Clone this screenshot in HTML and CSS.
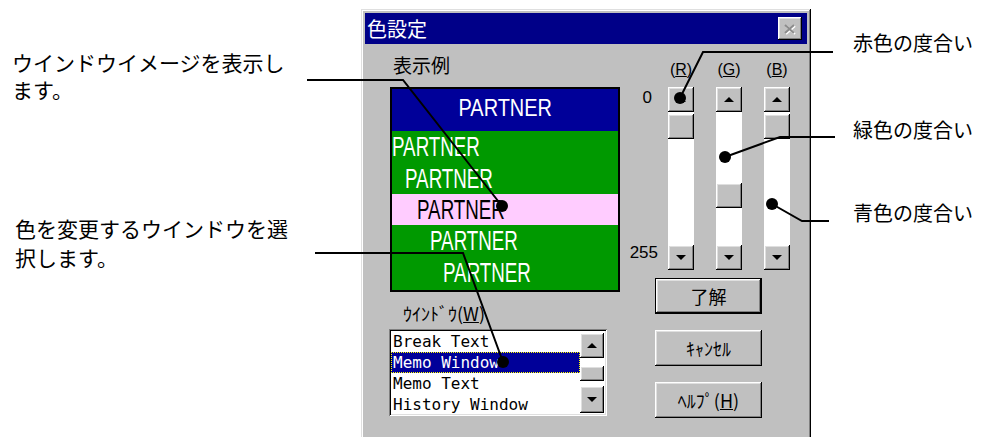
FILE: index.html
```html
<!DOCTYPE html>
<html lang="ja">
    <head>
        <meta charset="UTF-8" />
        <meta name="viewport" content="width=device-width, initial-scale=1.0" />
        <title>色設定</title>
        <link rel="stylesheet" href="styles.css">
    </head>
    <body>
        <div class="sheet">
            <div class="notes notes-left">
                <p class="note note-preview">ウインドウイメージを表示し<br />ます。</p>
                <p class="note note-window">色を変更するウインドウを選<br />択します。</p>
            </div>

            <div class="dialog">
                <div class="titlebar">
                    <span class="title">色設定</span>
                    <span class="closebtn">
                        <svg width="14" height="12" viewBox="0 0 14 12">
                            <path d="M2 2 L11 10 M11 2 L2 10" stroke="#fff" stroke-width="2" transform="translate(1 1)" />
                            <path d="M2 2 L11 10 M11 2 L2 10" stroke="#8c8c8c" stroke-width="2" />
                        </svg>
                    </span>
                </div>
                <div class="dlgbody">
                    <div class="leftcol">
                        <div class="caption">表示例</div>
                        <div class="preview">
                            <div class="pv-head"><span class="pv-text">PARTNER</span></div>
                            <div class="pv-row row-a"><span class="pv-text">PARTNER</span></div>
                            <div class="pv-row row-b indent-1"><span class="pv-text">PARTNER</span></div>
                            <div class="pv-row row-b pink indent-2"><span class="pv-text">PARTNER</span></div>
                            <div class="pv-row row-a indent-3"><span class="pv-text">PARTNER</span></div>
                            <div class="pv-row row-c indent-4"><span class="pv-text">PARTNER</span></div>
                        </div>
                        <div class="caption caption-list">ｳｲﾝﾄﾞｳ(<u>W</u>)</div>
                        <div class="listbox">
                            <ul class="items">
                                <li>Break Text</li>
                                <li class="sel">Memo Window</li>
                                <li>Memo Text</li>
                                <li>History Window</li>
                            </ul>
                            <div class="sb sb-list">
                                <span class="arrow up"></span>
                                <span class="track"><span class="thumb"></span></span>
                                <span class="arrow down"></span>
                            </div>
                        </div>
                    </div>

                    <div class="rightcol">
                        <div class="rgb">
                            <span></span>
                            <span class="ch">(<u>R</u>)</span>
                            <span class="ch">(<u>G</u>)</span>
                            <span class="ch">(<u>B</u>)</span>
                            <div class="vals"><span class="val-min">0</span><span>255</span></div>
                            <div class="sb">
                                <span class="arrow up"></span>
                                <span class="track"><span class="thumb" style="margin-top: 2px"></span></span>
                                <span class="arrow down"></span>
                            </div>
                            <div class="sb">
                                <span class="arrow up"></span>
                                <span class="track"><span class="thumb" style="margin-top: 71px"></span></span>
                                <span class="arrow down"></span>
                            </div>
                            <div class="sb">
                                <span class="arrow up"></span>
                                <span class="track"><span class="thumb" style="margin-top: 2px"></span></span>
                                <span class="arrow down"></span>
                            </div>
                        </div>
                        <div class="btns">
                            <button class="btn default">了解</button>
                            <button class="btn">ｷｬﾝｾﾙ</button>
                            <button class="btn">ﾍﾙﾌﾟ(<u>H</u>)</button>
                        </div>
                    </div>
                </div>
            </div>

            <div class="notes notes-right">
                <p class="note note-red">赤色の度合い</p>
                <p class="note note-green">緑色の度合い</p>
                <p class="note note-blue">青色の度合い</p>
            </div>
        </div>

        <svg class="leaders" width="983" height="437" viewBox="0 0 983 437">
            <polyline points="307,80 403,80 502,206" />
            <polyline points="315,253 463,253 503,362" />
            <polyline points="680,98 703,52 833,52" />
            <polyline points="725,157 780,137 835,137" />
            <polyline points="772,204 802,221 829,221" />
            <circle cx="502" cy="206" r="6" />
            <circle cx="503" cy="362" r="6" />
            <circle cx="680" cy="98" r="6" />
            <circle cx="725" cy="157" r="6" />
            <circle cx="772" cy="204" r="6" />
        </svg>
    </body>
</html>
```

FILE: styles.css
```css
body {
    margin: 0;
    height: 437px;
    overflow: hidden;
    position: relative;
    background: #fff;
    color: #000;
    font-family: "Noto Sans CJK JP", sans-serif;
}
.sheet {
    display: flex;
}
.notes-left {
    width: 361px;
    flex: none;
}
.notes-right {
    padding-left: 42px;
}
.note {
    margin: 0;
    font-size: 20px;
    line-height: 26px;
    white-space: nowrap;
}
.notes-left .note {
    font-size: 21px;
    line-height: 27px;
}
.note-preview {
    padding: 49px 0 0 12px;
}
.notes-left .note-window {
    padding: 111px 0 0 15px;
    line-height: 29px;
}
.note-red {
    margin-top: 30px;
}
.note-green {
    margin-top: 61px;
}
.note-blue {
    margin-top: 57px;
}

/* dialog frame */
.dialog {
    flex: none;
    width: 450px;
    height: 440px;
    margin-top: 9px;
    padding: 4px;
    box-sizing: border-box;
    background: #c0c0c0;
    box-shadow: inset -1px -1px #000, inset 1px 1px #dfdfdf,
        inset -2px -2px #808080, inset 2px 2px #fff;
}
.titlebar {
    height: 31px;
    background: #000088;
    display: flex;
    justify-content: space-between;
    align-items: flex-start;
}
.title {
    color: #fff;
    font-size: 20px;
    line-height: 31px;
    padding-left: 2px;
}
.closebtn {
    width: 24px;
    height: 23px;
    margin: 4px 5px 0 0;
    background: #c0c0c0;
    display: flex;
    align-items: center;
    justify-content: center;
    box-shadow: inset -1px -1px #000, inset 1px 1px #fff,
        inset -2px -2px #808080, inset 2px 2px #dfdfdf;
}
.dlgbody {
    display: grid;
    grid-template-columns: 255px 181px;
    column-gap: 6px;
}

/* left column */
.leftcol {
    padding-left: 25px;
}
.caption {
    margin-top: 9px;
    padding-left: 3px;
    font-size: 19px;
    line-height: 24px;
}
.caption-list {
    margin-top: 10px;
    padding-left: 13px;
    font-size: 18px;
    line-height: 22px;
}
.preview {
    margin-top: 10px;
    width: 230px;
    height: 205px;
    box-sizing: border-box;
    border: 2px solid #000;
    background: #009900;
    overflow: hidden;
}
.pv-head {
    height: 42px;
    background: #000099;
    color: #fff;
    text-align: center;
    font-family: "Liberation Sans", sans-serif;
    font-size: 24px;
    line-height: 38px;
}
.pv-head .pv-text {
    display: inline-block;
    transform: scaleX(0.83);
}
.pv-row {
    color: #fff;
    font-family: "Liberation Sans", sans-serif;
    font-size: 28px;
    white-space: nowrap;
}
.pv-row .pv-text {
    display: inline-block;
    transform: scaleX(0.67);
    transform-origin: left center;
}
.row-a {
    height: 32px;
    line-height: 32px;
}
.row-b {
    height: 31px;
    line-height: 31px;
}
.row-c {
    height: 33px;
    line-height: 31px;
}
.pink {
    background: #ffccff;
    color: #000;
}
.indent-1 {
    padding-left: 13px;
}
.indent-2 {
    padding-left: 25px;
}
.indent-3 {
    padding-left: 38px;
}
.indent-4 {
    padding-left: 51px;
}

.listbox {
    margin: 5px 0 0 -1px;
    width: 218px;
    height: 87px;
    box-sizing: border-box;
    padding: 2px;
    background: #fff;
    display: flex;
    box-shadow: inset 1px 1px #808080, inset -1px -1px #fff,
        inset 2px 2px #000, inset -2px -2px #dfdfdf;
}
.items {
    flex: 1;
    list-style: none;
    margin: 0;
    padding: 0;
    font-family: "DejaVu Sans Mono", monospace;
    font-size: 16px;
}
.items li {
    height: 21px;
    line-height: 21px;
    padding-left: 2px;
    white-space: nowrap;
}
.items .sel {
    background: #000099;
    color: #fff;
    outline: 1px dotted #ffff00;
    outline-offset: -1px;
}

/* scroll bars */
.sb {
    display: flex;
    flex-direction: column;
    width: 26px;
    height: 183px;
}
.sb-list {
    width: 24px;
    height: auto;
    padding: 2px 1px 1px 0;
}
.arrow {
    flex: none;
    height: 25px;
    background: #c0c0c0;
    display: flex;
    align-items: center;
    justify-content: center;
    box-shadow: inset -1px -1px #000, inset 1px 1px #fff,
        inset -2px -2px #808080, inset 2px 2px #dfdfdf;
}
.sb-list .down {
    height: 27px;
}
.arrow::before {
    content: '';
    border-left: 5px solid transparent;
    border-right: 5px solid transparent;
}
.up::before {
    border-bottom: 5px solid #000;
}
.down::before {
    border-top: 5px solid #000;
}
.track {
    flex: 1;
    background: #fff;
    display: flex;
    flex-direction: column;
}
.thumb {
    height: 25px;
    background: #c0c0c0;
    box-shadow: inset -1px -1px #000, inset 1px 1px #fff,
        inset -2px -2px #808080, inset 2px 2px #dfdfdf;
}
.sb-list .thumb {
    height: 15px;
    margin-top: 8px;
}

/* right column */
.rgb {
    padding-top: 16px;
    display: grid;
    grid-template-columns: 20px 26px 26px 26px;
    grid-template-rows: 20px 183px;
    column-gap: 22px;
    row-gap: 7px;
}
.ch {
    font-family: "Liberation Sans", sans-serif;
    font-size: 16px;
    line-height: 20px;
    text-align: center;
    white-space: nowrap;
}
.vals {
    display: flex;
    flex-direction: column;
    justify-content: space-between;
    align-items: flex-end;
    margin-right: -12px;
    padding-bottom: 6px;
    font-family: "Liberation Sans", sans-serif;
    font-size: 17px;
    line-height: 22px;
}
.val-min {
    padding-right: 6px;
}
.btns {
    margin: 8px 0 0 29px;
    display: flex;
    flex-direction: column;
    gap: 16px;
}
.btn {
    width: 107px;
    height: 36px;
    padding: 0;
    border: none;
    background: #c0c0c0;
    font-family: "Noto Sans CJK JP", sans-serif;
    font-size: 18px;
    color: #000;
    box-shadow: inset -1px -1px #000, inset 1px 1px #fff,
        inset -2px -2px #808080, inset 2px 2px #dfdfdf;
}
.btn.default {
    box-shadow: inset 0 0 0 1px #000, inset -2px -2px #000,
        inset 2px 2px #fff, inset -3px -3px #808080, inset 3px 3px #dfdfdf;
}

.leaders {
    position: absolute;
    top: 0;
    left: 0;
    pointer-events: none;
}
.leaders polyline {
    fill: none;
    stroke: #000;
    stroke-width: 2;
}
.leaders circle {
    fill: #000;
}
```
